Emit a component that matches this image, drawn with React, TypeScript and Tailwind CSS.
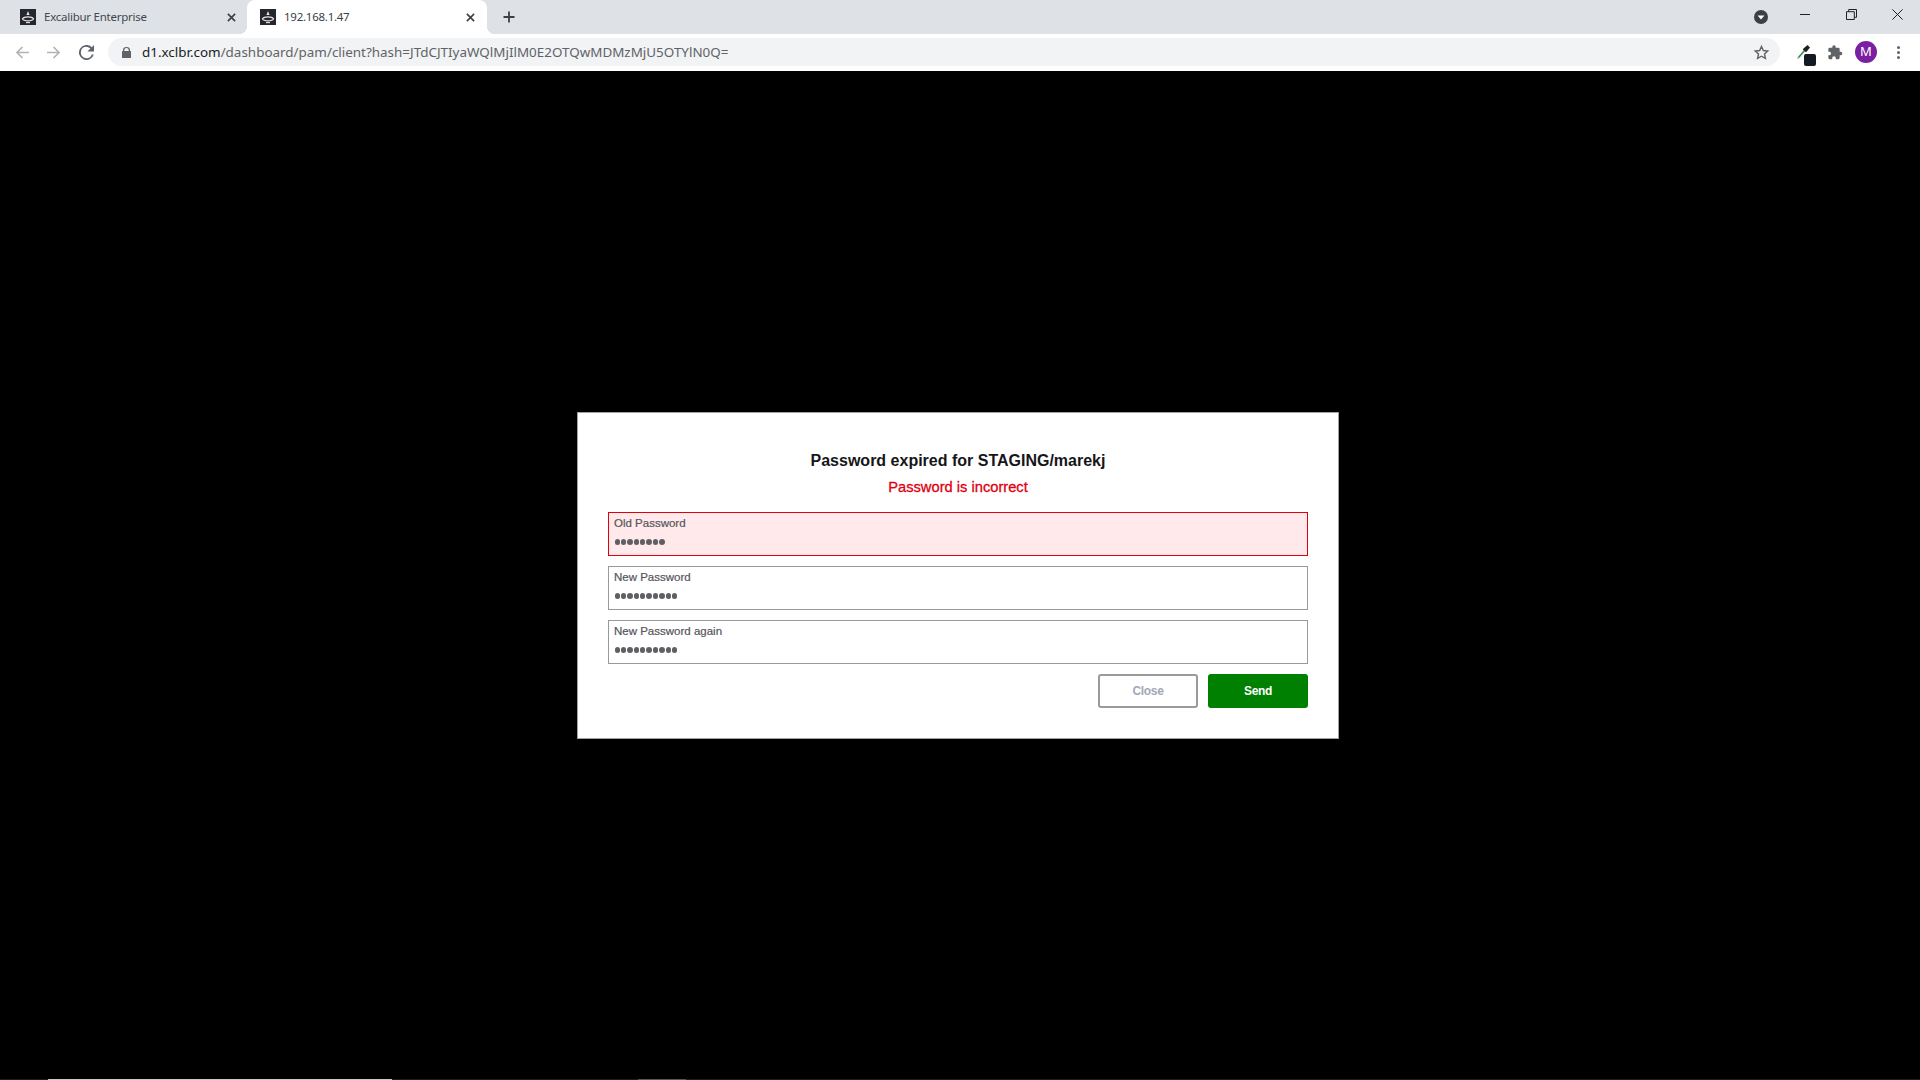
import type { ReactNode } from 'react'

const chromeFont = "font-['Noto_Sans','Open_Sans',sans-serif]"
const pageFont = "font-['Liberation_Sans',Arial,sans-serif]"

function TabLogo() {
  return (
    <svg viewBox="0 0 16 16" className="w-4 h-4 shrink-0">
      <rect width="16" height="16" fill="#26262e" />
      <path d="M8 2 9.600 6H6.400Z" fill="#e6e6e6" />
      <path
        d="M2.500 10C4 7.200 12 7.200 13.500 10 12 12.400 4 12.400 2.500 10Z"
        fill="none"
        stroke="#e6e6e6"
        strokeWidth="1.300"
      />
      <path d="M6 13.600h4" stroke="#e6e6e6" strokeWidth="1.100" fill="none" />
    </svg>
  )
}

function CloseX() {
  return (
    <svg viewBox="0 0 10 10" className="w-[9px] h-[9px] shrink-0">
      <path d="M1 1 9 9M9 1 1 9" stroke="#3c4043" strokeWidth="1.800" fill="none" />
    </svg>
  )
}

function Tab({ title, active }: { title: string; active?: boolean }) {
  return (
    <div
      className={`relative flex items-center h-[34px] rounded-t-[8px] ${
        active ? 'w-[240px] pl-[13px] pr-[12px] bg-white text-[#3c4043]' : 'w-[247px] pl-[20px] pr-[11px] text-[#45484d]'
      }`}
    >
      {active && (
        <>
          <span className="absolute -left-[8px] bottom-0 w-[8px] h-[8px] bg-[radial-gradient(circle_at_0_0,#dee1e6_8px,#ffffff_8px)]" />
          <span className="absolute -right-[8px] bottom-0 w-[8px] h-[8px] bg-[radial-gradient(circle_at_100%_0,#dee1e6_8px,#ffffff_8px)]" />
        </>
      )}
      <TabLogo />
      <span className={`ml-[8px] flex-1 text-[11.500px] tracking-[-0.250px] leading-none pb-[1px] ${chromeFont}`}>
        {title}
      </span>
      <CloseX />
    </div>
  )
}

function ToolIcon({ children, className = '' }: { children: ReactNode; className?: string }) {
  return <div className={`flex items-center justify-center shrink-0 ${className}`}>{children}</div>
}

function Field({ label, dots, error }: { label: string; dots: number; error?: boolean }) {
  return (
    <div
      className={`h-[44px] border px-[5px] pt-[3px] ${
        error ? 'border-[#e0000f] bg-[#ffe9ea]' : 'border-[#999999] bg-white'
      }`}
    >
      <div className="text-[11.500px] leading-[14px] text-[#55555a] [-webkit-text-stroke:0.2px_#55555a]">{label}</div>
      <div className="flex gap-[1px] mt-[9px] ml-[0.500px] h-[6px] items-center">
        {Array.from({ length: dots }).map((_, i) => (
          <span key={i} className="w-[5.400px] h-[5.400px] rounded-full bg-[#5f5f64]" />
        ))}
      </div>
    </div>
  )
}

export default function App() {
  return (
    <div className={`h-screen flex flex-col bg-black overflow-hidden ${pageFont}`}>
      {/* tab strip */}
      <div className="h-[34px] shrink-0 bg-[#dee1e6] flex items-center">
        <Tab title="Excalibur Enterprise" />
        <Tab title="192.168.1.47" active />
        <svg viewBox="0 0 12 12" className="w-[12px] h-[12px] ml-[16px] mb-[1px]">
          <path d="M6 .5v11M.5 6h11" stroke="#3c4043" strokeWidth="1.800" fill="none" />
        </svg>
        <div className="flex-1" />
        <svg viewBox="0 0 14 14" className="w-[14px] h-[14px] mr-[32px]">
          <circle cx="7" cy="7" r="7" fill="#3c4043" />
          <path d="M3.600 5.400h6.800L7 9.400Z" fill="#fff" />
        </svg>
        <svg viewBox="0 0 10 1" className="w-[10px] h-[1px] mr-[36px] mb-[6px]">
          <rect width="10" height="1" fill="#202124" />
        </svg>
        <svg viewBox="0 0 11 11" className="w-[11px] h-[11px] mr-[35px] mb-[5px]">
          <path d="M.5 2.700h7.800v7.800H.5ZM2.700 2.700V.5h7.800v7.800H8.300" fill="none" stroke="#202124" />
        </svg>
        <svg viewBox="0 0 11 11" className="w-[11px] h-[11px] mr-[17px] mb-[5px]">
          <path d="M.4.400 10.600 10.600M10.600.400.4 10.600" fill="none" stroke="#202124" />
        </svg>
      </div>

      {/* toolbar */}
      <div className="h-[37px] shrink-0 bg-white flex items-center pl-[15px] pb-[1px]">
        <ToolIcon className="w-[14px]">
          <svg viewBox="0 0 13 13" className="w-[13px] h-[13px]">
            <path d="M13 6.500H1.800M6.500 1 1 6.500 6.500 12" stroke="#b1b3b6" strokeWidth="1.600" fill="none" />
          </svg>
        </ToolIcon>
        <ToolIcon className="w-[14px] ml-[17px]">
          <svg viewBox="0 0 13 13" className="w-[13px] h-[13px]">
            <path d="M0 6.500h11.200M6.500 1 12 6.500 6.500 12" stroke="#b1b3b6" strokeWidth="1.600" fill="none" />
          </svg>
        </ToolIcon>
        <ToolIcon className="w-[15px] ml-[19px]">
          <svg viewBox="0 0 16 16" className="w-[15px] h-[15px]">
            <path
              d="M13.650 2.350A8 8 0 1 0 15.730 10h-2.080A6 6 0 1 1 8 2c1.660 0 3.140.69 4.220 1.780L9 7h7V0z"
              fill="#5f6368"
            />
          </svg>
        </ToolIcon>
        <div className="ml-[14px] w-[1672px] h-[28px] rounded-full bg-[#f1f3f4] flex items-center pl-[14px] pr-[10px]">
          <svg viewBox="0 0 9 11" className="w-[9px] h-[11px] shrink-0">
            <path
              d="M1 4V3a3.500 3 0 0 1 7 0v1h.4a.6.6 0 0 1 .6.600v5.800a.6.6 0 0 1-.6.600H.6a.6.6 0 0 1-.6-.600V4.600A.6.6 0 0 1 .6 4Zm1.300 0h4.400V3a2.200 2 0 0 0-4.400 0Z"
              fill="#5f6368"
            />
          </svg>
          <div className={`ml-[11px] flex-1 text-[13.430px] leading-none whitespace-nowrap pt-[1px] ${chromeFont}`}>
            <span className="text-[#202124]">d1.xclbr.com</span>
            <span className="text-[#5f6368]">/dashboard/pam/client?hash=JTdCJTIyaWQlMjIlM0E2OTQwMDMzMjU5OTYlN0Q=</span>
          </div>
          <svg viewBox="0 0 24 24" className="w-[17px] h-[17px] shrink-0">
            <path
              d="M12 3.500l2.600 5.700 6.200.7-4.600 4.200 1.300 6.100L12 17.200l-5.500 3 1.300-6.100-4.600-4.200 6.200-.7Z"
              fill="none"
              stroke="#5f6368"
              strokeWidth="2"
            />
          </svg>
        </div>
        <div className="relative w-[20px] h-[24px] ml-[17px] shrink-0">
          <svg viewBox="0 0 13 14" className="absolute left-0 top-[5px] w-[13px] h-[14px]">
            <path d="M1.500 12.500 8 5" stroke="#3e8e55" strokeWidth="1.800" fill="none" />
            <path d="M.5 13.500 2 12" stroke="#9aa0a6" strokeWidth="1.500" fill="none" />
            <path d="M6.500 3.500 10.500 0l2.500 2.500-3 3.800-1 1L5.800 4.400Z" fill="#202124" />
          </svg>
          <span className="absolute left-[7px] top-[14px] w-[12px] h-[12px] rounded-[2px] bg-[#141a24]" />
        </div>
        <ToolIcon className="w-[16px] ml-[10px]">
          <svg viewBox="0 0 24 24" className="w-[17px] h-[17px]">
            <path
              d="M20.500 11H19V7a2 2 0 0 0-2-2h-4V3.500a2.500 2.500 0 0 0-5 0V5H4a2 2 0 0 0-2 2v3.800h1.500a2.700 2.700 0 0 1 0 5.400H2V20a2 2 0 0 0 2 2h3.800v-1.500a2.700 2.700 0 0 1 5.400 0V22H17a2 2 0 0 0 2-2v-4h1.500a2.500 2.500 0 0 0 0-5Z"
              fill="#5f6368"
            />
          </svg>
        </ToolIcon>
        <div
          className={`ml-[12px] w-[22px] h-[22px] shrink-0 rounded-full bg-[#7b1fa2] text-white flex items-center justify-center text-[13px] ${chromeFont}`}
        >
          M
        </div>
        <div className="ml-[20px] flex flex-col gap-[2px]">
          <span className="w-[3px] h-[3px] rounded-full bg-[#5f6368]" />
          <span className="w-[3px] h-[3px] rounded-full bg-[#5f6368]" />
          <span className="w-[3px] h-[3px] rounded-full bg-[#5f6368]" />
        </div>
      </div>

      {/* page */}
      <div className="flex-1 flex items-center justify-center pr-[4px] pt-[1px]">
        <div className="w-[762px] h-[327px] bg-white border border-[#a0a0a0] px-[30px] pt-[38px]">
          <h1 className="text-center text-[16px] leading-[20px] font-bold text-[#16161a]">
            Password expired for STAGING/marekj
          </h1>
          <p className="text-center text-[14.700px] leading-[18px] mt-[7px] [-webkit-text-stroke:0.3px_#e0000f] text-[#e0000f]">
            Password is incorrect
          </p>
          <div className="mt-[16px] flex flex-col gap-[10px]">
            <Field label="Old Password" dots={8} error />
            <Field label="New Password" dots={10} />
            <Field label="New Password again" dots={10} />
          </div>
          <div className="mt-[10px] flex justify-end gap-[10px]">
            <button className="w-[100px] h-[34px] rounded-[3px] border-2 border-[#9a9a9a] bg-white text-[12px] tracking-[-0.300px] font-bold text-[#a3a7b8]">
              Close
            </button>
            <button className="w-[100px] h-[34px] rounded-[3px] bg-[#008000] text-[12px] tracking-[-0.300px] font-bold text-white">
              Send
            </button>
          </div>
        </div>
      </div>

      {/* sliver of a bar at the bottom edge */}
      <div className="h-[1px] shrink-0 flex">
        <div className="w-[48px] bg-[#1c1c1c]" />
        <div className="w-[344px] bg-[#c8c8c8]" />
        <div className="w-[246px] bg-[#1c1c1c]" />
        <div className="w-[48px] bg-[#555555]" />
        <div className="flex-1 bg-[#1c1c1c]" />
      </div>
    </div>
  )
}
